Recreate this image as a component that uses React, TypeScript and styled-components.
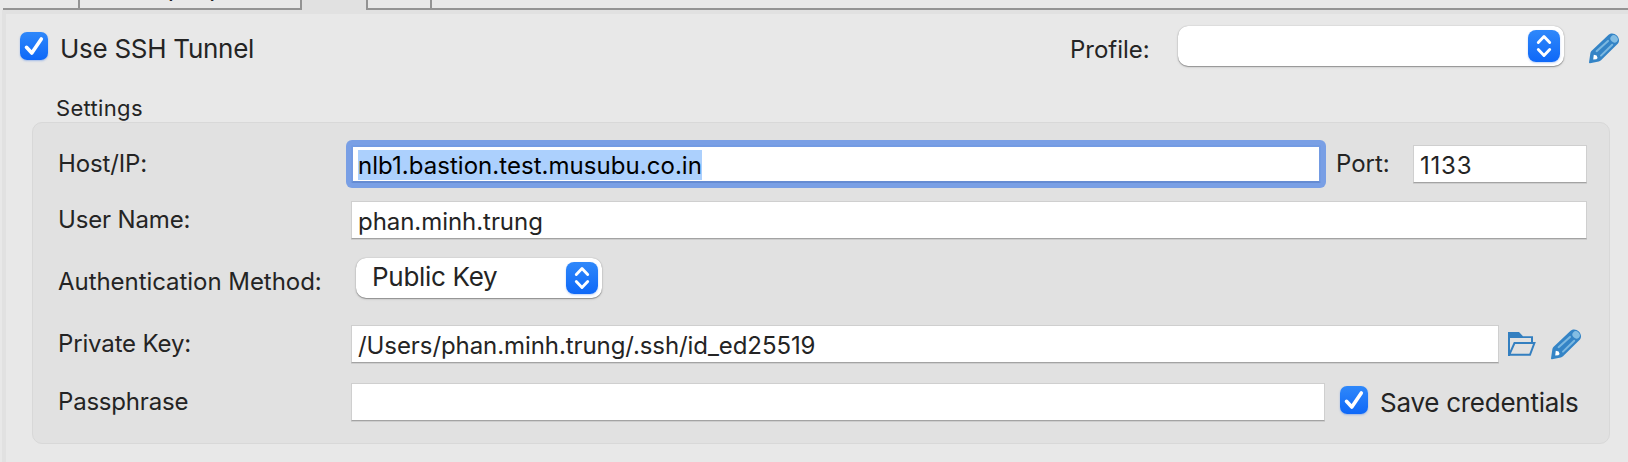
import React from 'react';
import styled, { createGlobalStyle } from 'styled-components';

const GlobalStyle = createGlobalStyle`
  *, *::before, *::after { box-sizing: border-box; }
  body {
    margin: 0;
    background: #e8e8e8;
    color: #242424;
    font-family: Inter, "Liberation Sans", sans-serif;
    overflow: hidden;
  }
`;

const Window = styled.div`
  width: 1628px;
  height: 462px;
  display: flex;
  flex-direction: column;
  padding-left: 2px;
  overflow: hidden;
`;

const TabStrip = styled.div`
  height: 10px;
  display: flex;
  padding-left: 1px;
`;

const Tab = styled.div<{ $width: number; $active?: boolean }>`
  width: ${p => p.$width}px;
  height: 10px;
  flex: none;
  display: flex;
  align-items: flex-end;
  justify-content: center;
  overflow: hidden;
  font-size: 26px;
  line-height: 32px;
  white-space: nowrap;
  background: ${p => (p.$active ? '#e1e1e1' : '#e8e8e8')};
  border-bottom: ${p => (p.$active ? 'none' : '2px solid #939393')};
  border-right: 2px solid #939393;
`;

const TabTitle = styled.span`
  padding-bottom: 5px;
  letter-spacing: 0.1px;
`;

const TabRest = styled.div`
  flex: 1;
  border-bottom: 2px solid #939393;
`;

const Page = styled.div`
  flex: 1;
  border-top: 4px solid #e1e1e1;
  border-left: 4px solid #e1e1e1;
  padding: 12px 8px 0 14px;
`;

const Header = styled.div`
  height: 40px;
  display: flex;
  align-items: center;
`;

const Text = styled.span<{ $size?: number; $track?: number; $top?: number; $bottom?: number }>`
  font-size: ${p => p.$size ?? 24}px;
  line-height: 36px;
  letter-spacing: ${p => p.$track ?? 0}px;
  padding-top: ${p => p.$top ?? 0}px;
  padding-bottom: ${p => p.$bottom ?? 0}px;
  white-space: nowrap;
`;

const CheckBoxFace = styled.span`
  width: 28px;
  height: 28px;
  flex: none;
  display: flex;
  border-radius: 7px;
  background: linear-gradient(#2f88fa, #0e68f8);
  box-shadow: 0 1px 2px rgba(30, 100, 230, 0.35);
`;

const CheckLabel = styled.label<{ $gap: number }>`
  display: flex;
  align-items: center;
  gap: ${p => p.$gap}px;
`;

const Spacer = styled.div`
  flex: 1;
`;

const SelectBox = styled.div<{ $width: number }>`
  width: ${p => p.$width}px;
  height: 40px;
  flex: none;
  display: flex;
  align-items: center;
  justify-content: space-between;
  padding: 0 4px 0 16px;
  border-radius: 10px;
  background: #fff;
  box-shadow: 0 0 1px rgba(0, 0, 0, 0.3), 0 1px 1px rgba(0, 0, 0, 0.28), 0 1px 3px rgba(0, 0, 0, 0.12);
`;

const Stepper = styled.span`
  width: 32px;
  height: 32px;
  display: flex;
  border-radius: 8px;
  background: linear-gradient(#2f88fa, #0e68f8);
  box-shadow: 0 1px 2px rgba(30, 100, 230, 0.3);
`;

const GroupTitle = styled.div`
  height: 56px;
  padding: 24px 0 0 36px;
`;

const Group = styled.div`
  width: 1578px;
  height: 322px;
  margin-left: 12px;
  padding: 22px 22px 0 25px;
  border: 1px solid #d8d8d8;
  border-radius: 10px;
  background: #e1e1e1;
`;

const Row = styled.div<{ $height?: number; $gap: number }>`
  height: ${p => p.$height ?? 38}px;
  margin-bottom: ${p => p.$gap}px;
  display: flex;
  align-items: center;
`;

const Caption = styled.div<{ $width: number }>`
  width: ${p => p.$width}px;
  flex: none;
  display: flex;
`;

const Field = styled.div<{ $width: number; $focused?: boolean }>`
  width: ${p => p.$width}px;
  height: 38px;
  flex: none;
  display: flex;
  align-items: center;
  background: #fff;
  border: 1px solid #cfcfcf;
  border-bottom-color: #a3a3a3;
  padding: 3px 0 0 6px;
  box-shadow: 0 1px 0 #cdcdcd;
  ${p =>
    p.$focused &&
    `
    color: #000;
    border: 2px solid #739be3;
    border-bottom-color: #658bd2;
    padding: 0 0 0 5px;
    box-shadow: 0 0 0 5px #799fe5;
    border-radius: 2px;
  `}
`;

const Selected = styled.span`
  height: 30px;
  display: flex;
  align-items: center;
  padding-top: 2px;
  margin-top: 2px;
  background: #acd0fd;
`;

const IconSlot = styled.span<{ $left: number; $top?: number; $bottom?: number }>`
  display: flex;
  margin-left: ${p => p.$left}px;
  padding-top: ${p => p.$top ?? 0}px;
  padding-bottom: ${p => p.$bottom ?? 0}px;
`;

const Check = () => (
  <CheckBoxFace>
    <svg width="28" height="28" viewBox="0 0 28 28" fill="none">
      <path d="M6.5 15.3 L11.8 21 L21.3 7" stroke="#fff" strokeWidth="3.6" strokeLinecap="round" strokeLinejoin="round" />
    </svg>
  </CheckBoxFace>
);

const Arrows = () => (
  <Stepper>
    <svg width="32" height="32" viewBox="0 0 32 32" fill="none">
      <path d="M10.3 12.4 L16 6.6 L21.7 12.4 M10.3 19.6 L16 25.4 L21.7 19.6" stroke="#fff" strokeWidth="2.9" strokeLinecap="round" strokeLinejoin="round" />
    </svg>
  </Stepper>
);

const Pencil = () => (
  <svg width="31" height="31" viewBox="0 0 31 31">
    <path d="M0 29.6 L1.4 20 Q1.6 18.9 2.4 18.1 L19.6 1.8 C24.5 -2.4 33 4.4 29 10.6 L12 27.2 Q11 28.2 9.8 28.5 L1 30.3 Q0 30.4 0 29.6 Z" fill="#3484c6" />
    <ellipse cx="25.1" cy="5.9" rx="3.4" ry="3.9" transform="rotate(-45 25.1 5.9)" fill="#83bde3" />
    <path d="M7.6 18.2 L19 7.9 M12 22.6 L23.2 11.8" stroke="#7cb8e0" strokeWidth="2" strokeLinecap="round" />
    <path d="M4.8 21.8 L7.6 22.4 L8.6 25 L7.4 26.2 L4.2 26.4 Z" fill="#fff" />
  </svg>
);

const Folder = () => (
  <svg width="28" height="24" viewBox="0 0 28 24" fill="none">
    <path d="M0 0 H11 L15 4.2 H25 V11 H23 V6 H2 V24 H0 Z" fill="#337fc0" />
    <path d="M1.2 22.8 L6.5 11 H26.4 L22 22.8 Z" stroke="#337fc0" strokeWidth="2" />
  </svg>
);

export default function App() {
  return (
    <Window>
      <GlobalStyle />
      <TabStrip>
        <Tab $width={77} />
        <Tab $width={222}>
          <TabTitle>Driver properties</TabTitle>
        </Tab>
        <Tab $width={66} $active />
        <Tab $width={64} />
        <TabRest />
      </TabStrip>
      <Page>
        <Header>
          <CheckLabel $gap={12}>
            <Check />
            <Text $size={26} $top={5} $track={-0.28}>Use SSH Tunnel</Text>
          </CheckLabel>
          <Spacer />
          <Caption $width={108}>
            <Text $top={7}>Profile:</Text>
          </Caption>
          <SelectBox $width={386}>
            <span />
            <Arrows />
          </SelectBox>
          <IconSlot $left={25} $top={4}>
            <Pencil />
          </IconSlot>
        </Header>
        <GroupTitle>
          <Text $size={22} $track={0.33}>Settings</Text>
        </GroupTitle>
        <Group>
          <Row $gap={18}>
            <Caption $width={293}>
              <Text $track={-0.12}>Host/IP:</Text>
            </Caption>
            <Field $width={970} $focused>
              <Selected>
                <Text $track={0.04}>nlb1.bastion.test.musubu.co.in</Text>
              </Selected>
            </Field>
            <IconSlot $left={15} />
            <Caption $width={77}>
              <Text>Port:</Text>
            </Caption>
            <Field $width={174}>
              <Text $track={0.8}>1133</Text>
            </Field>
          </Row>
          <Row $gap={19}>
            <Caption $width={293}>
              <Text $track={-0.15}>User Name:</Text>
            </Caption>
            <Field $width={1236}>
              <Text $track={-0.05}>phan.minh.trung</Text>
            </Field>
          </Row>
          <Row $height={40} $gap={27}>
            <Caption $width={298}>
              <Text $top={8} $track={-0.05}>Authentication Method:</Text>
            </Caption>
            <SelectBox $width={246}>
              <Text $size={26} $bottom={3} $track={-0.3}>Public Key</Text>
              <Arrows />
            </SelectBox>
          </Row>
          <Row $gap={20}>
            <Caption $width={293}>
              <Text $track={-0.15}>Private Key:</Text>
            </Caption>
            <Field $width={1148}>
              <Text $track={-0.08}>/Users/phan.minh.trung/.ssh/id_ed25519</Text>
            </Field>
            <IconSlot $left={9}>
              <Folder />
            </IconSlot>
            <IconSlot $left={15}>
              <Pencil />
            </IconSlot>
          </Row>
          <Row $gap={0}>
            <Caption $width={293}>
              <Text $track={-0.2}>Passphrase</Text>
            </Caption>
            <Field $width={974} />
            <IconSlot $left={15} />
            <CheckLabel $gap={12}>
              <IconSlot $left={0} $bottom={4}>
                <Check />
              </IconSlot>
              <Text $size={26} $top={2} $track={-0.26}>Save credentials</Text>
            </CheckLabel>
          </Row>
        </Group>
      </Page>
    </Window>
  );
}
